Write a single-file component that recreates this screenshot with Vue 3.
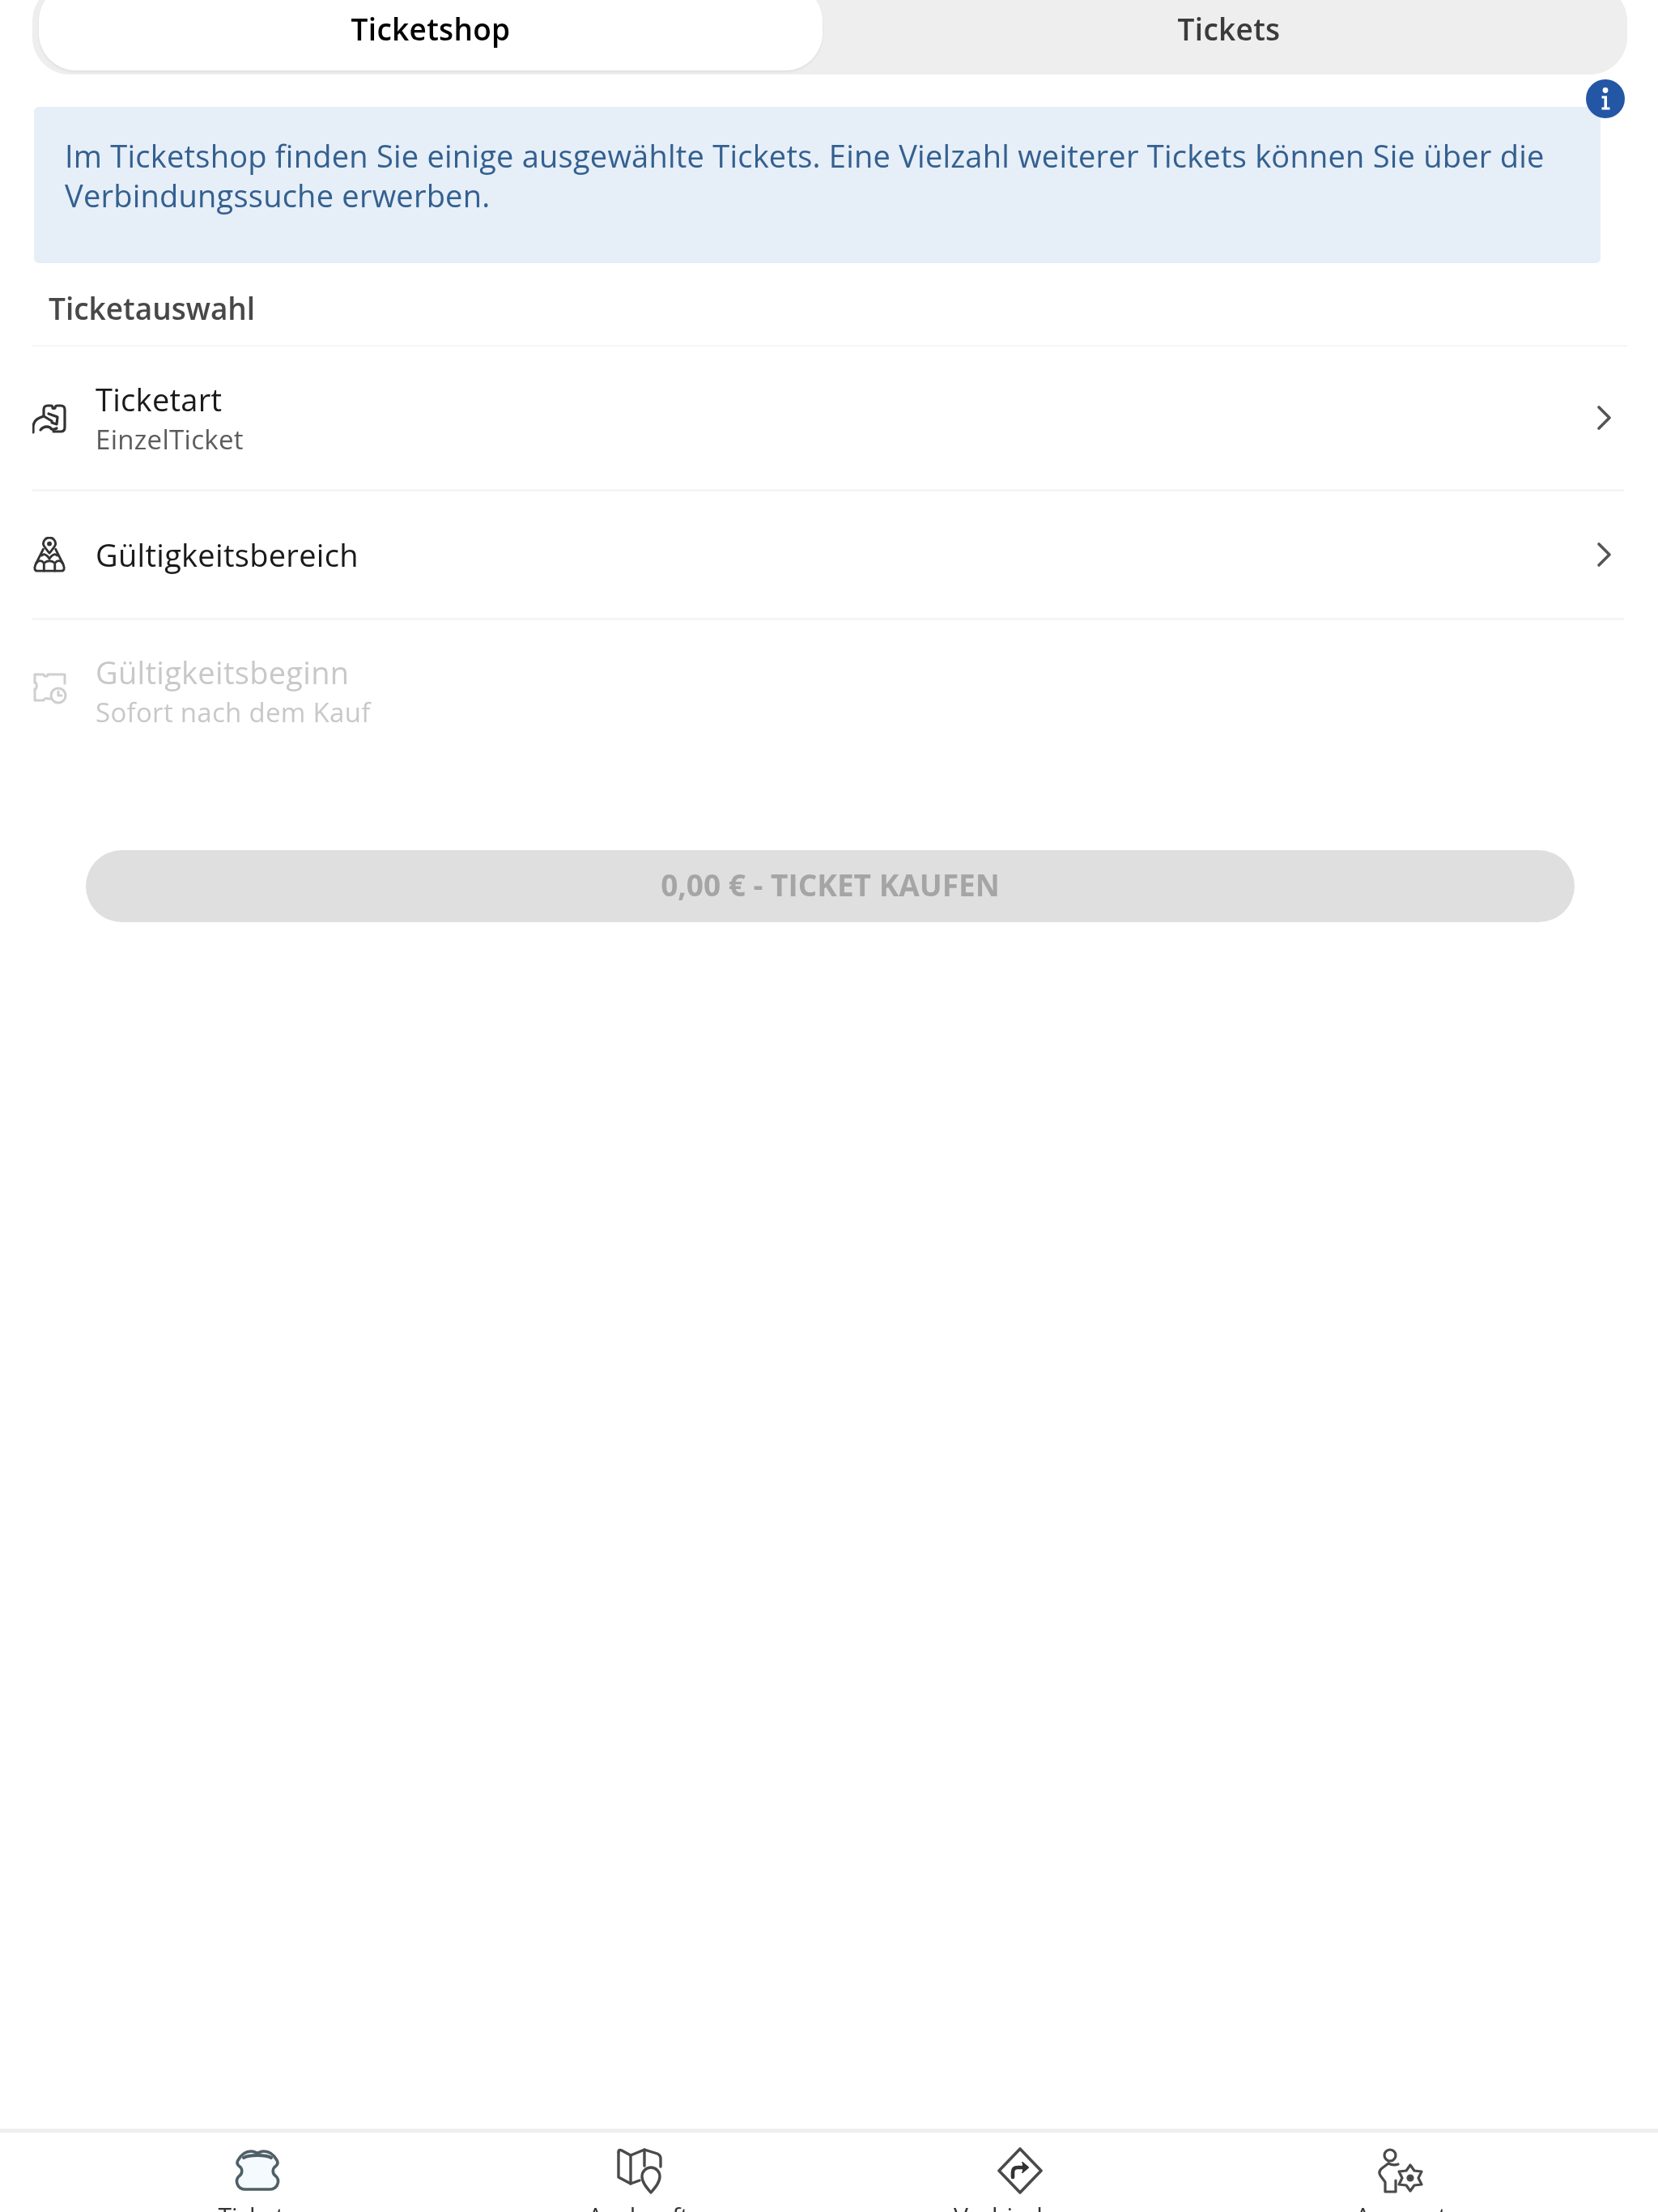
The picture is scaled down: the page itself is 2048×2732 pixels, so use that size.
<script setup>
const tabs = [
  { label: 'Ticketshop', active: true },
  { label: 'Tickets', active: false },
]

const navItems = [
  { key: 'ticket', label: 'Tickets' },
  { key: 'map', label: 'Auskunft' },
  { key: 'route', label: 'Verbindung' },
  { key: 'account', label: 'Account' },
]
</script>

<template>
  <div class="page">
    <main class="content">
      <div class="tabs">
        <button v-for="t in tabs" :key="t.label" :class="['tab', t.active && 'tab--active']">
          {{ t.label }}
        </button>
      </div>

      <div class="info">
        <p class="info-text">
          Im Ticketshop finden Sie einige ausgewählte Tickets. Eine Vielzahl weiterer Tickets können Sie über die Verbindungssuche erwerben.
        </p>
        <svg class="info-badge" viewBox="0 0 48 48">
          <circle cx="24" cy="24" r="24" fill="#2456a6" />
          <circle cx="24" cy="13.5" r="3.4" fill="#fff" />
          <path d="M19.5 20.5h6.5v14h3.5v3h-10v-3h3v-11h-3z" fill="#fff" />
        </svg>
      </div>

      <h2 class="section-title">Ticketauswahl</h2>

      <div class="row row--first">
        <svg class="row-icon" viewBox="0 0 44 44" fill="none" stroke="#333" stroke-width="3.2" stroke-linecap="round" stroke-linejoin="round">
          <path d="M14 20V12Q14 7 19 7H23Q25 7 25 10Q26 11 28 10Q28 7 31 7H35Q40 7 40 12V34Q40 39 35 39H26" />
          <path d="M1 40V32Q2 25 9 22L14 20L24 26" />
          <path d="M20 17L31 21L30 30L24 28" />
          <path d="M10 37Q15 31 22 34Q24 38 30 35" />
        </svg>
        <div class="row-text">
          <div class="row-title row-title--medium">Ticketart</div>
          <div class="row-sub">EinzelTicket</div>
        </div>
        <svg class="chevron" viewBox="0 0 20 32" fill="none" stroke="#555" stroke-width="3.6" stroke-linecap="round" stroke-linejoin="round">
          <path d="M3 3l13 13L3 29" />
        </svg>
      </div>

      <div class="row row--short">
        <svg class="row-icon" viewBox="0 0 44 46" fill="none" stroke="#333" stroke-width="3" stroke-linecap="round" stroke-linejoin="round">
          <path d="M21 21C16 15 13 12 13 9A8 8 0 0 1 29 9C29 12 26 15 21 21Z" />
          <circle cx="21" cy="9" r="1.6" />
          <path d="M13 16L3 36Q0 44 6 44H36Q42 44 39 36L29 16" />
          <path d="M11 24Q15 20 21 28Q27 20 31 24M4 34Q9 28 14 34V44M38 34Q33 28 28 34V44M14 34Q21 28 28 34" />
        </svg>
        <div class="row-text">
          <div class="row-title row-title--medium">Gültigkeitsbereich</div>
        </div>
        <svg class="chevron" viewBox="0 0 20 32" fill="none" stroke="#555" stroke-width="3.6" stroke-linecap="round" stroke-linejoin="round">
          <path d="M3 3l13 13L3 29" />
        </svg>
      </div>

      <div class="row row--disabled">
        <svg class="row-icon" viewBox="0 0 44 44" fill="none" stroke="#cfcfcf" stroke-width="3" stroke-linecap="round" stroke-linejoin="round">
          <path d="M3 4h11c0 3 5 3 5 0h21v11" />
          <path d="M3 4v10M3 22v14h11c0-2 3-3 5-2h4" />
          <path d="M3 14c3 0 3 8 0 8" />
          <circle cx="32" cy="30" r="9" />
          <path d="M32 25v5h4" />
        </svg>
        <div class="row-text">
          <div class="row-title row-title--medium">Gültigkeitsbeginn</div>
          <div class="row-sub">Sofort nach dem Kauf</div>
        </div>
      </div>

      <button class="buy" disabled>0,00 € - TICKET KAUFEN</button>
    </main>

    <nav class="nav">
      <div v-for="item in navItems" :key="item.key" class="nav-item">
        <svg class="nav-icon" viewBox="0 0 60 60" fill="none" stroke-linecap="round" stroke-linejoin="round">
          <template v-if="item.key === 'ticket'">
            <path d="M6 17C10 10 16 6 22 6C26 6 28 8 30 8C32 8 34 6 38 6C44 6 50 10 54 17C56 20 55 22 53 24C48 27 48 34 53 37C56 40 56 43 55 46C54 50 50 53 46 53H14C10 53 6 50 5 46C4 43 4 40 7 37C12 34 12 27 7 24C5 22 4 20 6 17Z" fill="#f4fafd" stroke="#4f5f66" stroke-width="3.6" />
            <path d="M13 14C20 10 40 10 47 14" stroke="#4f5f66" stroke-width="4" />
          </template>
          <template v-else-if="item.key === 'map'">
            <g stroke="#4a4a4a" stroke-width="3.4">
              <path d="M5 7Q5 3 9 5L20 11L37 4L53 9Q57 11 57 15V25" />
              <path d="M5 7V38L20 46L31 42" />
              <path d="M20 11V46M37 4V24" />
              <path d="M45 57C39 50 34 44 34 37A11 11 0 0 1 56 37C56 44 51 50 45 57Z" />
            </g>
          </template>
          <template v-else-if="item.key === 'route'">
            <path d="M30 3l26 27-26 27L4 30z" stroke="#4a4a4a" stroke-width="3.6" />
            <path d="M21 38v-6c0-4 2-6 6-6h10" stroke="#333" stroke-width="4.6" />
            <path d="M33 20l7 6-7 6" fill="#333" stroke="#333" stroke-width="2" />
          </template>
          <template v-else>
            <g stroke="#4a4a4a" stroke-width="3.2">
              <circle cx="16" cy="11" r="7" />
              <path d="M14 21L6 27Q1 31 4 36L10 44V56H23V42" />
              <path d="M14 21Q20 24 26 22" />
              <path d="M41 23L46 30L55 31L51 39L55 47L46 48L41 55L36 48L27 47L31 39L27 31L36 30Z" />
              <circle cx="41" cy="39" r="3" fill="#444" />
            </g>
          </template>
        </svg>
        <span class="nav-label">{{ item.label }}</span>
      </div>
    </nav>
  </div>
</template>

<style scoped>
.page {
  width: 2048px;
  height: 2732px;
  overflow: hidden;
  display: flex;
  flex-direction: column;
  background: #fff;
  font-family: "Open Sans", "Noto Sans", sans-serif;
  color: #111;
  filter: blur(0.6px);
}

.content {
  flex: 1;
  display: flex;
  flex-direction: column;
  padding: 0 38px 0 40px;
}

.tabs {
  display: grid;
  grid-template-columns: 968px 1fr;
  height: 112px;
  margin-top: -20px;
  padding: 0 0 5px 8px;
  box-sizing: border-box;
  background: #eee;
  border-radius: 46px;
}

.tab {
  border: none;
  background: transparent;
  font: inherit;
  font-size: 37px;
  font-weight: 600;
  letter-spacing: 0.3px;
  color: #3b3b3b;
  padding: 3px 0 0 10px;
}

.tab--active {
  background: #fff;
  color: #000;
  border-radius: 46px;
  box-shadow: 0 2px 3px rgba(0, 0, 0, 0.06);
  padding-left: 0;
}

.info {
  position: relative;
  margin: 40px 33px 0 2px;
  height: 193px;
  background: #e6eef8;
  border-radius: 6px;
  padding: 36px 38px 0;
  box-sizing: border-box;
}

.info-text {
  margin: 0;
  font-size: 38px;
  letter-spacing: 0.23px;
  line-height: 49px;
  color: #33608f;
}

.info-badge {
  position: absolute;
  top: -34px;
  right: -30px;
  width: 48px;
  height: 48px;
}

.section-title {
  margin: 0;
  padding: 31px 0 0 20px;
  height: 103px;
  box-sizing: border-box;
  font-size: 37px;
  line-height: 50px;
  font-weight: 600;
  color: #484848;
  border-bottom: 2px solid #f6f6f6;
}

.row {
  display: flex;
  align-items: center;
  height: 179px;
  box-sizing: border-box;
  border-bottom: 3px solid #f5f5f5;
  margin-right: 4px;
}

.row--short {
  height: 159px;
}

.row--disabled {
  border-bottom: none;
  height: 170px;
}

.row-icon {
  width: 44px;
  height: 44px;
  flex-shrink: 0;
  margin-right: 34px;
}

.row-text {
  flex: 1;
  display: flex;
  flex-direction: column;
}

.row--first .row-text {
  padding-top: 4px;
}

.row--disabled .row-text {
  padding-top: 7px;
}

.row-title {
  font-size: 38px;
  line-height: 50px;
  color: #1a1a1a;
}

.row-title--medium {
  font-weight: 500;
  letter-spacing: 0.3px;
}

.row-sub {
  font-size: 33px;
  letter-spacing: 0.3px;
  line-height: 50px;
  color: #5c5c5c;
}

.row--disabled .row-title,
.row--disabled .row-sub {
  color: #c8c8c8;
}

.chevron {
  width: 20px;
  height: 32px;
  margin-right: 14px;
}

.buy {
  margin: 114px 65px 0 66px;
  height: 89px;
  padding: 0 0 4px;
  border: none;
  border-radius: 45px;
  background: #dfdfdf;
  color: #a5a5a5;
  font: inherit;
  font-size: 37px;
  font-weight: 700;
}

.nav {
  display: grid;
  grid-template-columns: repeat(4, 1fr);
  height: 98px;
  padding: 0 82px;
  border-top: 5px solid #efefef;
  flex-shrink: 0;
}

.nav-item {
  display: flex;
  flex-direction: column;
  align-items: center;
  padding-top: 17px;
}

.nav-icon {
  width: 60px;
  height: 60px;
  flex-shrink: 0;
}

.nav-label {
  margin-top: 6px;
  font-size: 30px;
  line-height: 40px;
  color: #333;
}
</style>

<style>
html, body {
  margin: 0;
  background: #fff;
}
</style>
